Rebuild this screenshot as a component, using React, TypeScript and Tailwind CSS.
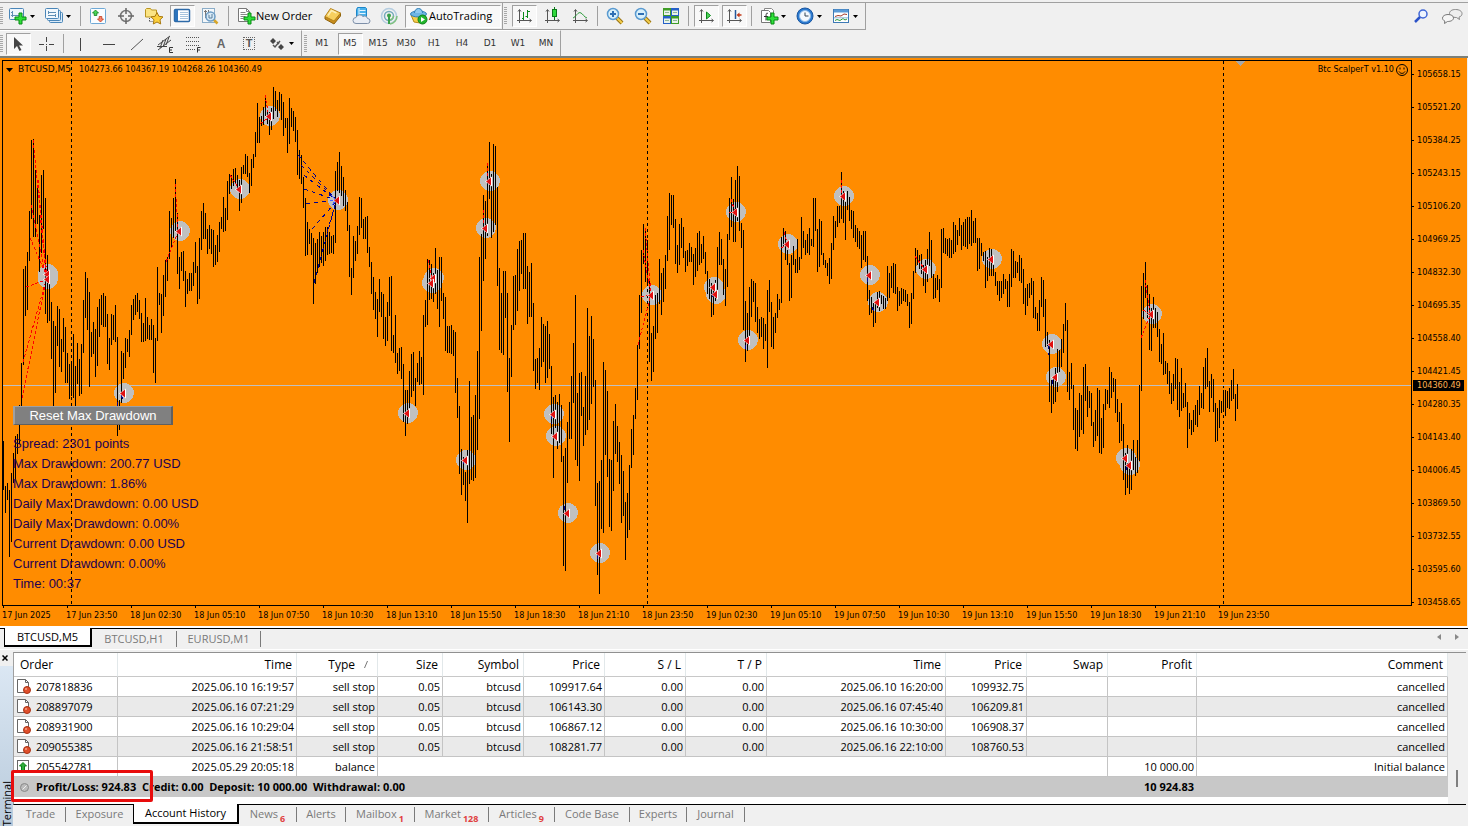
import React from 'react';
import clsx from 'clsx';

const UI = "font-['Open_Sans','Noto_Sans',sans-serif]";
const TAHOMA = "font-['DejaVu_Sans_Condensed','Noto_Sans',sans-serif]";

// High / low of every bar in canvas pixels, first bar at x = 3, one bar each 2px
const BARS: number[] = [
  441,489, 486,512, 483,499, 490,556, 473,541, 453,482, 436,478, 434,453, 405,443, 363,424,
  269,364, 266,315, 252,309, 211,260, 140,218, 139,236, 170,236, 185,223, 215,271, 175,252,
  170,228, 198,313, 255,322, 284,320, 302,358, 321,405, 326,392, 306,345, 309,366, 339,371,
  318,351, 327,382, 353,382, 364,398, 361,395, 334,397, 366,405, 343,383, 359,395, 344,393,
  300,352, 272,317, 278,329, 292,386, 332,356, 322,353, 329,376, 307,365, 299,336, 295,324,
  293,326, 296,326, 314,363, 338,369, 314,344, 315,339, 305,341, 337,435, 400,429, 351,402,
  353,378, 338,367, 339,351, 330,356, 305,334, 299,319, 295,314, 293,311, 300,318, 313,341,
  323,341, 298,340, 317,338, 325,339, 319,339, 325,372, 338,382, 267,340, 293,304, 294,332,
  275,315, 260,296, 257,280, 211,258, 218,247, 198,237, 179,230, 213,273, 257,288, 252,270,
  251,280, 271,306, 279,293, 273,290, 273,290, 262,285, 242,272, 266,303, 238,298, 211,249,
  203,238, 213,238, 229,253, 225,248, 229,253, 230,266, 245,264, 235,261, 222,251, 217,228,
  197,231, 208,230, 181,219, 174,193, 175,188, 169,185, 168,182, 175,190, 180,210, 167,202,
  165,173, 154,173, 156,176, 173,192, 159,185, 154,167, 132,156, 103,142, 117,142, 116,125,
  107,124, 95,115, 110,123, 112,134, 108,129, 87,118, 91,110, 100,116, 92,110, 94,119,
  102,135, 118,127, 118,152, 98,143, 108,126, 111,130, 117,141, 130,174, 150,178, 155,183,
  177,207, 198,255, 222,254, 229,243, 233,254, 238,303, 243,283, 239,272, 232,266, 236,262,
  232,265, 227,260, 227,254, 232,253, 236,252, 235,253, 171,242, 162,190, 152,192, 166,195,
  177,205, 190,210, 202,230, 225,276, 268,294, 236,277, 241,260, 226,253, 197,234, 198,227,
  219,238, 217,238, 216,252, 247,266, 262,293, 277,309, 292,318, 299,336, 279,311, 292,316,
  294,338, 317,345, 302,340, 277,315, 276,350, 335,352, 315,362, 353,373, 348,370, 347,378,
  364,421, 390,435, 390,423, 371,407, 354,396, 352,390, 378,405, 363,381, 351,384, 357,383,
  315,394, 300,326, 259,324, 260,299, 264,298, 273,301, 248,293, 270,308, 257,326, 257,300,
  293,318, 297,350, 326,352, 326,352, 325,353, 330,355, 332,392, 378,417, 406,473, 449,494,
  457,484, 472,500, 450,522, 381,483, 417,479, 415,480, 395,477, 351,449, 257,418, 234,330,
  195,280, 201,258, 163,235, 142,198, 174,237, 144,231, 146,224, 187,285, 268,349, 293,352,
  271,354, 271,317, 293,391, 358,441, 325,376, 276,329, 275,324, 249,310, 241,290, 240,273,
  233,288, 233,288, 266,323, 272,316, 263,316, 303,370, 359,388, 358,382, 348,389, 317,366,
  324,361, 326,382, 321,377, 334,368, 366,433, 397,477, 395,427, 402,448, 394,442, 405,461,
  456,565, 448,570, 422,482, 402,438, 376,438, 343,402, 295,459, 393,465, 373,480, 372,415,
  407,445, 376,434, 308,429, 336,419, 316,403, 339,386, 380,505, 483,574, 481,593, 460,528,
  362,532, 370,454, 391,476, 459,526, 460,530, 421,490, 404,453, 426,461, 442,483, 455,522,
  471,515, 502,559, 493,537, 465,529, 429,467, 415,454, 388,418, 345,399, 295,348, 250,312,
  224,263, 228,281, 240,284, 280,361, 333,380, 326,371, 295,338, 293,332, 259,303, 273,314,
  268,301, 255,288, 216,260, 193,249, 195,224, 195,227, 219,263, 245,272, 224,264, 218,247,
  227,257, 251,271, 250,265, 243,261, 247,261, 254,284, 248,276, 233,270, 231,264, 244,262,
  236,258, 252,273, 271,293, 279,298, 283,316, 285,314, 280,300, 247,293, 232,264, 239,264,
  259,294, 269,305, 234,286, 198,239, 177,226, 199,241, 180,241, 166,220, 176,230, 223,247,
  230,329, 301,361, 313,350, 287,335, 279,316, 281,301, 283,321, 307,332, 319,338, 317,336,
  318,348, 324,340, 290,367, 280,311, 302,346, 317,348, 313,332, 294,317, 299,309, 237,302,
  228,245, 231,259, 250,264, 263,300, 255,297, 246,264, 259,272, 239,272, 257,269, 217,258,
  231,247, 240,254, 234,252, 228,254, 239,245, 198,246, 198,230, 229,271, 219,266, 221,254,
  253,264, 260,267, 263,275, 258,283, 243,278, 216,249, 221,237, 206,226, 206,222, 172,218,
  191,222, 202,239, 191,209, 197,220, 210,228, 211,237, 225,241, 228,246, 231,248, 235,267,
  231,259, 231,261, 256,300, 290,314, 297,312, 303,326, 303,322, 292,307, 291,310, 295,303,
  296,308, 298,308, 266,300, 273,297, 266,287, 263,292, 264,293, 287,310, 291,305, 288,303,
  289,300, 290,301, 294,305, 302,327, 293,323, 271,298, 248,272, 250,264, 255,268, 254,273,
  265,285, 260,292, 249,281, 232,265, 240,277, 274,298, 278,297, 275,289, 279,301, 229,287,
  228,252, 238,253, 239,255, 238,257, 240,257, 222,253, 225,251, 230,244, 218,235, 225,249,
  222,245, 219,246, 217,248, 217,243, 210,245, 221,242, 218,242, 238,270, 238,268, 243,255,
  252,260, 251,287, 257,280, 248,275, 249,275, 265,275, 272,285, 281,294, 281,300, 281,297,
  274,293, 279,288, 281,306, 274,306, 249,286, 251,277, 261,277, 262,272, 255,280, 258,282,
  269,303, 288,314, 284,305, 283,297, 278,294, 281,317, 307,318, 313,330, 300,330, 277,306,
  280,316, 299,346, 332,345, 340,401, 380,412, 377,403, 368,401, 349,391, 350,371, 339,366,
  324,352, 303,330, 320,391, 372,399, 363,388, 385,429, 408,448, 410,450, 393,436, 395,429,
  367,433, 364,400, 386,416, 391,407, 393,425, 422,446, 410,440, 388,435, 390,452, 418,453,
  404,447, 389,409, 390,403, 367,407, 372,397, 378,391, 379,412, 399,421, 412,442, 403,440,
  424,479, 453,494, 445,487, 465,493, 449,489, 440,469, 457,475, 440,472, 385,460, 286,390,
  273,318, 262,297, 285,317, 294,349, 308,350, 297,327, 308,327, 312,336, 329,361, 344,363,
  333,374, 361,373, 363,383, 371,393, 383,403, 374,400, 358,388, 359,409, 382,416, 368,410,
  393,407, 383,406, 402,447, 413,428, 420,434, 410,431, 405,424, 400,426, 386,414, 393,407,
  367,408, 358,388, 348,386, 381,411, 374,397, 379,411, 403,441, 408,440, 400,427, 401,412,
  390,411, 390,415, 391,407, 388,408, 380,400, 369,398, 394,420, 384,408,
];

const MARKERS: [number, number][] = [
  [48, 274], [48, 279], [180, 231], [240, 189], [270, 116], [338, 200], [124, 393],
  [434, 278], [432, 283], [490, 181], [486, 228], [652, 295], [714, 287], [716, 294],
  [736, 212], [748, 340], [788, 244], [844, 196], [870, 275], [878, 302], [926, 269],
  [992, 259], [1052, 344], [1056, 377], [1152, 314], [1126, 458], [1130, 465],
  [408, 413], [466, 460], [554, 414], [556, 436], [568, 513], [600, 553],
];

const SELL_LINES =
  'M33 140L47 276M31 205L46 276M38 180L46 272M40 215L46 274M30 238L45 272M26 287L46 280M23 362L45 284M22 398L45 285' +
  'M175 184L178 228M166 262L178 232M265 95L268 112M260 124L268 118M230 175L239 189M428 260L432 278M487 163L488 178M483 210L484 224' +
  'M645 228L651 293M643 250L650 290M641 297L650 295M638 345L650 298M731 199L735 212M729 212L735 213M784 232L787 243M781 248L787 245' +
  'M841 180L842 193M915 256L924 268M1145 280L1150 312M1143 310L1150 314M1141 338L1150 316';
const BUY_LINES =
  'M298 155L336 200M301 165L336 200M304 175L336 200M304 189L336 200M306 204L336 200M312 229L335 203M327 232L336 203M314 283L335 205' +
  'M121 395L123 400M117 402L117 412M463 460L463 468M712 293L712 300M745 345L745 352M867 278L867 284M872 307L874 312M1048 345L1048 355M1052 380L1052 386M1126 466L1126 474M551 415L551 424M597 555L597 560M564 506L564 512';

const DAY_BREAKS = [71, 647, 1223];

const barsPath = () => {
  let d = '';
  for (let i = 0; i < BARS.length; i += 2) {
    d += `M${3 + i} ${BARS[i]}h1V${BARS[i + 1] + 1}h-1z`;
  }
  return d;
};

const prices = [
  '105658.15', '105521.20', '105384.25', '105243.15', '105106.20', '104969.25', '104832.30', '104695.35', '104558.40',
  '104421.45', '104280.35', '104143.40', '104006.45', '103869.50', '103732.55', '103595.60', '103458.65',
];

const times = [
  '17 Jun 2025', '17 Jun 23:50', '18 Jun 02:30', '18 Jun 05:10', '18 Jun 07:50', '18 Jun 10:30', '18 Jun 13:10',
  '18 Jun 15:50', '18 Jun 18:30', '18 Jun 21:10', '18 Jun 23:50', '19 Jun 02:30', '19 Jun 05:10', '19 Jun 07:50',
  '19 Jun 10:30', '19 Jun 13:10', '19 Jun 15:50', '19 Jun 18:30', '19 Jun 21:10', '19 Jun 23:50',
];

const stats = [
  'Spread: 2301 points',
  'Max Drawdown: 200.77 USD',
  'Max Drawdown: 1.86%',
  'Daily Max Drawdown: 0.00 USD',
  'Daily Max Drawdown: 0.00%',
  'Current Drawdown: 0.00 USD',
  'Current Drawdown: 0.00%',
  'Time: 00:37',
];

const orders = [
  { id: '207818836', open: '2025.06.10 16:19:57', price: '109917.64', close: '2025.06.10 16:20:00', closePrice: '109932.75' },
  { id: '208897079', open: '2025.06.16 07:21:29', price: '106143.30', close: '2025.06.16 07:45:40', closePrice: '106209.81' },
  { id: '208931900', open: '2025.06.16 10:29:04', price: '106867.12', close: '2025.06.16 10:30:00', closePrice: '106908.37' },
  { id: '209055385', open: '2025.06.16 21:58:51', price: '108281.77', close: '2025.06.16 22:10:00', closePrice: '108760.53' },
];

const terminalTabs = [
  { label: 'Trade', width: 'w-[50px]' },
  { label: 'Exposure', width: 'w-[67px]' },
  { label: 'Account History', width: 'w-[106px]', active: true },
  { label: 'News', width: 'w-[58px]', badge: '6' },
  { label: 'Alerts', width: 'w-[49px]' },
  { label: 'Mailbox', width: 'w-[69px]', badge: '1' },
  { label: 'Market', width: 'w-[74px]', badge: '128' },
  { label: 'Articles', width: 'w-[66px]', badge: '9' },
  { label: 'Code Base', width: 'w-[75px]' },
  { label: 'Experts', width: 'w-[57px]' },
  { label: 'Journal', width: 'w-[58px]' },
];

type Kids = { children?: React.ReactNode };

const Icon = ({ children }: Kids) => (
  <svg className="h-5 w-5 shrink-0" viewBox="0 0 20 20" fill="none" aria-hidden="true">{children}</svg>
);

const Plus = ({ x, y }: { x: number; y: number }) => (
  <path
    d={`M${x + 4} ${y}h3v4h4v3h-4v4h-3v-4h-4v-3h4z`}
    fill="#2fe03a"
    stroke="#078a12"
  />
);

const Caret = () => (
  <svg className="h-[3px] w-[5px] shrink-0" viewBox="0 0 5 3" aria-hidden="true"><path d="M0 0h5L2.500 3z" fill="#000" /></svg>
);

const ToolButton = ({ label, active, children }: Kids & { label: string; active?: boolean }) => (
  <span className="flex w-7 shrink-0 items-center justify-center">
    <button
      aria-label={label}
      className={clsx(
        'flex h-[22px] w-[25px] items-center justify-center',
        active && 'border border-t-[#a0a0a0] border-l-[#a0a0a0] border-r-white border-b-white bg-[#f8f8f8]',
      )}
    >
      {children}
    </button>
  </span>
);

const DropButton = ({ label, children }: Kids & { label: string }) => (
  <button aria-label={label} className="flex w-9 shrink-0 items-center gap-[2px] pl-1">
    {children}
    <Caret />
  </button>
);

const Handle = () => (
  <span className="my-1 w-1 shrink-0 bg-[repeating-linear-gradient(to_bottom,#a8a8a8_0px,#a8a8a8_1px,#f0f0f0_1px,#f0f0f0_2px)] bg-clip-content pr-px" />
);

const Sep = ({ wide }: { wide?: boolean }) => (
  <span className={clsx('flex shrink-0 justify-center py-[3px]', wide ? 'w-2' : 'w-[7px]')}>
    <span className="w-px bg-[#a0a0a0]" />
  </span>
);

const Axes = () => <path d="M5.500 4v13M3 14.500h14M4 5.500l1.500-2 1.500 2M15.500 13l2 1.500-2 1.500" stroke="#555" />;

const Magnifier = ({ plus }: { plus?: boolean }) => (
  <Icon>
    <path d="M12 12l5 5" stroke="#9a7413" strokeWidth="4" />
    <path d="M12 12l5 5" stroke="#f4cf4e" strokeWidth="2" />
    <circle cx="8" cy="8" r="5.500" fill="#d8f0fb" stroke="#5a9ad0" strokeWidth="1.500" />
    <path d={plus ? 'M5 8h6M8 5v6' : 'M5 8h6'} stroke="#2e6fb4" strokeWidth="2" />
  </Icon>
);

const MainToolbar = () => (
  <div className="flex h-7 items-stretch border-t border-[#a0a0a0]">
    <div className="flex border-r border-b border-[#a0a0a0]">
      <Handle />
      <DropButton label="New chart">
        <Icon>
          <rect x="1.500" y="2.500" width="14" height="11" rx="1" fill="#eef6fd" stroke="#4a86b8" />
          <path d="M4.500 5v6M3 9.500h8M3 6.500h2" stroke="#5f8fb5" />
          <Plus x={7} y={7} />
        </Icon>
      </DropButton>
      <DropButton label="Profiles">
        <Icon>
          <rect x="5.500" y="6.500" width="13" height="10" rx="1" fill="#dcebf8" stroke="#4a86b8" />
          <rect x="3.500" y="4.500" width="13" height="10" rx="1" fill="#dcebf8" stroke="#4a86b8" />
          <rect x="1.500" y="2.500" width="13" height="10" rx="1" fill="#f2f8fd" stroke="#4a86b8" />
          <path d="M4 6.500h8M4 9.500h8M4.500 5v3M11.500 8v3" stroke="#5f8fb5" />
        </Icon>
      </DropButton>
      <Sep wide />
      <ToolButton label="Market Watch">
        <Icon>
          <rect x="2.500" y="2.500" width="15" height="15" rx="1" fill="#fafdff" stroke="#6fa9d6" />
          <path d="M7.500 4l3 3h-1.700v2.500H6.200V7H4.500z" fill="#4ad658" stroke="#0a7f19" strokeWidth=".8" />
          <path d="M12.500 16l3-3h-1.700v-2.500h-2.600V13H9.500z" fill="#f9836c" stroke="#c23a1a" strokeWidth=".8" />
        </Icon>
      </ToolButton>
      <ToolButton label="Data Window">
        <Icon>
          <circle cx="10" cy="10" r="5.500" stroke="#777" strokeWidth="1.500" />
          <path d="M10 2v6M10 12v6M2 10h6M12 10h6" stroke="#666" strokeWidth="1.500" />
        </Icon>
      </ToolButton>
      <ToolButton label="Navigator">
        <Icon>
          <path d="M1.500 3.500l1-1h4l1 1.500h5v7h-11z" fill="#fbe483" stroke="#b99420" />
          <path d="M5.500 12v4M5.500 15.500h4" stroke="#555" strokeDasharray="1 1" />
          <path d="M13 6.500l1.900 3.800 4.100.6-3 2.900.7 4.200-3.700-2-3.700 2 .7-4.200-3-2.900 4.100-.6z" fill="#fcd03c" stroke="#a97a10" />
        </Icon>
      </ToolButton>
      <ToolButton label="Terminal" active>
        <Icon>
          <rect x="2.500" y="3.500" width="15" height="12" rx="1" fill="#fff" stroke="#2d6aa8" strokeWidth="1.500" />
          <rect x="3" y="4" width="3" height="11" fill="#2d74bd" />
          <path d="M8 6.500h8M8 8.500h8M8 10.500h8M8 12.500h8" stroke="#a8c4dd" />
        </Icon>
      </ToolButton>
      <ToolButton label="Strategy Tester">
        <Icon>
          <rect x="2.500" y="2.500" width="12" height="14" fill="#f4f8fb" stroke="#8badc8" />
          <path d="M5.500 4v8M4 5.500h3M8.500 4v5" stroke="#777" />
          <path d="M13.500 13.500l4 4" stroke="#d8a62a" strokeWidth="2.500" />
          <circle cx="10.500" cy="10.500" r="4.500" fill="#cfe6f6" fillOpacity=".8" stroke="#6d9cc4" strokeWidth="1.500" />
          <path d="M9 9v3h3V8" stroke="#5a7f9c" />
        </Icon>
      </ToolButton>
      <Sep wide />
      <button className={`${UI} flex w-[87px] shrink-0 items-center pl-1 text-[11px] text-black`}>
        <Icon>
          <path d="M2.500 2.500h8l3 3v10h-11z" fill="#fff" stroke="#777" />
          <path d="M10.500 2.500v3h3M4.500 6.500h5M4.500 8.500h7M4.500 10.500h5M4.500 12.500h3" stroke="#888" />
          <Plus x={8} y={7} />
        </Icon>
        <span className="whitespace-nowrap">New Order</span>
      </button>
      <ToolButton label="MetaEditor">
        <Icon>
          <path d="M2 10.500v2.500l9 5 6.500-8V7z" fill="#c98d1c" stroke="#8f640e" strokeLinejoin="round" />
          <path d="M2 10.500L7.500 2.500l10 4.500-6.500 8z" fill="#f7cf5e" stroke="#b5821b" strokeLinejoin="round" />
          <path d="M5 9.500l3.500-5 5 2.500" stroke="#fdeeb4" strokeWidth="1.500" />
        </Icon>
      </ToolButton>
      <ToolButton label="MQL5 VPS">
        <Icon>
          <path d="M6.500 1.500h8l1 1v9h-10v-8z" fill="#49b2ec" stroke="#1d86c9" />
          <path d="M8.500 4.500h6M8.500 7.500h6M8 2v9" stroke="#e4f5ff" />
          <path d="M5 17.500a3 3 0 010-6 4 4 0 017-1 3 3 0 014.500 2 2.500 2.500 0 010 5z" fill="#e9edf4" stroke="#7d8fa8" />
        </Icon>
      </ToolButton>
      <ToolButton label="Signals">
        <Icon>
          <circle cx="10" cy="10" r="7.500" stroke="#b5cde0" strokeWidth="1.500" />
          <circle cx="10" cy="10" r="4.500" stroke="#74a9bb" strokeWidth="1.500" />
          <path d="M11 18a8 8 0 007-8M11 14a4.500 4.500 0 003.500-4" stroke="#7fc17f" strokeWidth="1.500" />
          <circle cx="10" cy="9.500" r="2" fill="#39a04a" />
          <path d="M10 10v8" stroke="#39a04a" strokeWidth="2" />
        </Icon>
      </ToolButton>
      <button
        className={`${UI} mr-px ml-[2px] flex h-[23px] w-24 shrink-0 items-center self-center border border-t-[#a0a0a0] border-l-[#a0a0a0] border-r-white border-b-white bg-[#f8f8f8] pl-[3px] text-[11px] text-black`}
      >
        <Icon>
          <path d="M2 9l3 7 6 1 6-8z" fill="#f6cf4a" stroke="#b58a1a" />
          <ellipse cx="9.500" cy="8" rx="8" ry="3" fill="#6fb6e4" stroke="#2e7fb8" />
          <path d="M5.500 7c0-6 8-6 8 0" fill="#8fcaf0" stroke="#2e7fb8" />
          <circle cx="13.500" cy="13.500" r="4.500" fill="#22b52e" stroke="#0c8218" />
          <path d="M12 11v5l4-2.500z" fill="#fff" />
        </Icon>
        AutoTrading
      </button>
    </div>
    <div className="flex border-r border-b border-[#a0a0a0] pr-[2px] pl-px">
      <Handle />
      <span className="w-[2px]" />
      <ToolButton label="Bar chart" active>
        <Icon><Axes /><path d="M9.500 6v8M8 12.500h2M13.500 4v8M14 5.500h2M11.500 10.500h2" stroke="#0a8a1a" /></Icon>
      </ToolButton>
      <ToolButton label="Candlesticks">
        <Icon><Axes /><path d="M12.500 1v13" stroke="#0a7a18" /><rect x="10.500" y="3.500" width="4" height="7" fill="#2fd83c" stroke="#0a7a18" /></Icon>
      </ToolButton>
      <ToolButton label="Line chart">
        <Icon><Axes /><path d="M3 12c3-1 5-7 8-5 2 1 3 4 6 5" stroke="#2a9a3a" /></Icon>
      </ToolButton>
      <Sep />
      <ToolButton label="Zoom in"><Magnifier plus /></ToolButton>
      <ToolButton label="Zoom out"><Magnifier /></ToolButton>
      <ToolButton label="Tile windows">
        <Icon>
          <path d="M2 2h8v8H2zM10 10h8v8h-8z" fill="#3f9c26" />
          <path d="M10 2h8v8h-8zM2 10h8v8H2z" fill="#2560c8" />
          <path d="M3 4.500h6V9H3zM11 4.500h6V9h-6zM3 12.500h6V17H3zM11 12.500h6V17h-6z" fill="#e9f3ea" />
          <path d="M4 6.500h4M12 6.500h4M4 14.500h4M12 14.500h4" stroke="#8fb59a" />
        </Icon>
      </ToolButton>
      <Sep />
      <ToolButton label="Auto scroll" active>
        <Icon><Axes /><path d="M10.500 6v7l4-3.500z" fill="#4fd45a" stroke="#0a8a1a" /></Icon>
      </ToolButton>
      <ToolButton label="Chart shift" active>
        <Icon><Axes /><path d="M11.500 4v9" stroke="#24579a" strokeWidth="1.500" /><path d="M17.500 9h-3" stroke="#c23a1a" strokeWidth="1.500" /><path d="M15.500 6.500v5L12.500 9z" fill="#c23a1a" /></Icon>
      </ToolButton>
      <Sep />
      <DropButton label="Indicators">
        <Icon>
          <path d="M5.500 2.500h7l2 2v10h-9z" fill="#fff" stroke="#888" />
          <path d="M2.500 4.500h7l2 2v10h-9z" fill="#fff" stroke="#777" />
          <path d="M9 7.500c-2-1-2 0-2 7M5 10.500h4" stroke="#333" />
          <Plus x={8} y={7} />
        </Icon>
      </DropButton>
      <DropButton label="Periods">
        <Icon>
          <circle cx="10" cy="10" r="8" fill="#2b7ad0" stroke="#1a56a0" />
          <circle cx="10" cy="10" r="5.500" fill="#f4f9fe" stroke="#8fbbe8" />
          <path d="M10 6.500V10h3.500" stroke="#345" />
        </Icon>
      </DropButton>
      <DropButton label="Templates">
        <Icon>
          <rect x="2.500" y="3.500" width="15" height="13" fill="#fff" stroke="#3d7ab5" />
          <path d="M3 5h14" stroke="#5a9ad6" strokeWidth="3" />
          <path d="M4 10.500l3-1 3 .5 3-2 3 .5" stroke="#a33a2a" />
          <path d="M4 14.500l2-1 3 1 3-2 2 1.500 2-1" stroke="#2a9a3a" />
          <path d="M3 11.800h14" stroke="#8fb5d6" />
        </Icon>
      </DropButton>
    </div>
    <div className="ml-auto flex items-center gap-[10px] pr-[5px]">
      <button aria-label="Search">
        <Icon>
          <circle cx="12" cy="7" r="4" fill="#eef4ff" stroke="#3f66d6" strokeWidth="1.500" />
          <path d="M9 10l-5 5" stroke="#2c53c8" strokeWidth="2.500" />
        </Icon>
      </button>
      <button aria-label="Chat">
        <svg className="h-5 w-[22px]" viewBox="0 0 22 20" fill="none" aria-hidden="true">
          <path d="M14.500 2.500c4 0 6.500 1.800 6.500 4 0 1.800-1 3-3 3.600l.5 2.400-3-2c-4 0-7-1.500-7-4s2.500-4 6-4z" fill="#eee" stroke="#888" />
          <path d="M7 7.500c3 0 5.500 1.300 5.500 3.500S10 14.500 6.500 14.500l-3 2 .3-2.500C2 13.300 1.500 12 1.500 11c0-2 2.500-3.500 5.500-3.500z" fill="#f6f6f6" stroke="#777" />
        </svg>
      </button>
    </div>
  </div>
);

const periods = ['M1', 'M5', 'M15', 'M30', 'H1', 'H4', 'D1', 'W1', 'MN'];

const LineToolbar = () => (
  <div className="flex h-[26px] items-stretch">
    <div className="flex border-t border-r border-t-white border-r-[#a0a0a0] pr-[2px]">
      <Handle />
      <ToolButton label="Cursor" active>
        <Icon><path d="M6 3v12l3-3 2.500 5 2-1-2.500-4.500h4z" fill="#444" /></Icon>
      </ToolButton>
      <ToolButton label="Crosshair">
        <Icon><path d="M10.500 3v5M10.500 12v5M3 10.500h5M13 10.500h5M10 10.500h1" stroke="#444" /></Icon>
      </ToolButton>
      <Sep />
      <ToolButton label="Vertical line"><Icon><path d="M9.500 4v13" stroke="#444" /></Icon></ToolButton>
      <ToolButton label="Horizontal line"><Icon><path d="M4 10.500h12" stroke="#444" /></Icon></ToolButton>
      <ToolButton label="Trendline"><Icon><path d="M4 16L16 5" stroke="#555" /></Icon></ToolButton>
      <ToolButton label="Equidistant channel">
        <Icon>
          <path d="M3 11L15 2M3 16L16 6M5 14l3-8M8 13l3-8M11 11l3-8M2 12.500h10" stroke="#444" />
          <path d="M18 13.500h-3.500v5H18M14.500 16H17" stroke="#333" />
        </Icon>
      </ToolButton>
      <ToolButton label="Fibonacci retracement">
        <Icon>
          <path d="M3 3.500h14M3 7.500h14M3 11.500h14M3 15.500h9" stroke="#555" strokeDasharray="1 1" />
          <path d="M17.500 13.500h-3v5M14.500 16H17" stroke="#333" />
        </Icon>
      </ToolButton>
      <ToolButton label="Text"><span className="font-['Liberation_Sans',sans-serif] text-[12px] font-bold text-[#666]">A</span></ToolButton>
      <ToolButton label="Text label">
        <span className="border border-dotted border-[#666] px-[2px] font-['Liberation_Sans',sans-serif] text-[11px] leading-[11px] font-bold text-[#555]">T</span>
      </ToolButton>
      <DropButton label="Arrows">
        <Icon>
          <path d="M6 4l3 3-3 3-3-3zM14 10l3 3-3 3-3-3z" fill="#444" />
          <path d="M6 11l2 2 5-6M10 8l2 2" stroke="#555" strokeWidth="1.500" />
        </Icon>
      </DropButton>
    </div>
    <div className="flex border-t border-r border-t-white border-r-[#a0a0a0] pl-[2px]">
      <Handle />
      {periods.map((p) => (
        <ToolButton key={p} label={p} active={p === 'M5'}>
          <span className="font-['DejaVu_Sans',sans-serif] text-[9px] text-[#333]">{p}</span>
        </ToolButton>
      ))}
    </div>
  </div>
);

const Chart = () => (
  <section className={`${TAHOMA} mr-px flex bg-[#ff8c00] text-[9px] text-black`}>
    <div className="flex min-w-0 flex-1 flex-col pt-[2px] pl-[2px]">
      <div className="relative flex flex-1 overflow-hidden border border-black">
        <svg className="min-w-0 flex-1" shapeRendering="crispEdges" fill="none" aria-label="BTCUSD five minute bars">
          <g transform="translate(-3 -61)">
            {MARKERS.map(([x, y]) => (
              <circle key={`${x}-${y}`} cx={x} cy={y} r="10" fill="#c0c0c0" />
            ))}
            {DAY_BREAKS.map((x) => (
              <path key={x} d={`M${x + 0.5} 61V605`} stroke="#000" strokeDasharray="3 3" />
            ))}
            <rect x="3" y="385" width="100%" height="1" fill="#c0c0c0" />
            <path d={barsPath()} fill="#000" />
            <path d={SELL_LINES} stroke="#f00" strokeDasharray="3 2" />
            <path d={BUY_LINES} stroke="#00008b" strokeDasharray="4 4" />
            <path d="M336 200l-5-5M336 200h-6M336 200l-4 5" stroke="#4060ff" />
            {MARKERS.map(([x, y]) => (
              <g key={`${x}-${y}`} shapeRendering="auto">
                <path d={`M${x - 5} ${y + 0.5}l7-5v10z`} fill="#fff" />
                <path d={`M${x - 4} ${y + 0.5}l5-4v8z`} fill="#e01010" />
              </g>
            ))}
            <path d="M1235 61h10l-5 5z" fill="#a8a8a8" />
          </g>
        </svg>
        <div className="absolute inset-x-0 top-[3px] flex h-3 items-center px-[3px] whitespace-nowrap">
          <svg className="mr-[5px] h-1 w-[7px]" viewBox="0 0 7 4" aria-hidden="true"><path d="M0 0h7L3.500 4z" fill="#000" /></svg>
          <span className="w-[61px] font-['DejaVu_Sans',sans-serif]">BTCUSD,M5</span>
          <span>104273.66 104367.19 104268.26 104360.49</span>
          <span className="ml-auto">Btc ScalperT v1.10</span>
          <svg className="ml-[2px] h-3 w-3" viewBox="0 0 12 12" fill="none" stroke="#000" aria-hidden="true">
            <circle cx="6" cy="6" r="5.500" />
            <path d="M4 3.500v2M8 3.500v2M3 7.500c1.500 2.500 4.500 2.500 6 0" />
          </svg>
        </div>
        <div className="absolute top-[345px] left-[10px] flex flex-col font-['Liberation_Sans',sans-serif] text-[13px]">
          <button className="mb-[9px] h-[19px] w-40 border-t border-r-2 border-b border-l-2 border-t-[#a0a0a0] border-r-[#606060] border-b-[#606060] border-l-[#a0a0a0] bg-[#808080] leading-[17px] text-white">
            Reset Max Drawdown
          </button>
          {stats.map((line) => (
            <p key={line} className="leading-5 whitespace-nowrap text-[#1c0052]">{line}</p>
          ))}
        </div>
      </div>
      <div className="flex h-5 overflow-hidden">
        {times.map((t) => (
          <div key={t} className="w-16 shrink-0 whitespace-nowrap">
            <div className="ml-px h-[2px] w-px bg-black" />
            <div className="leading-[14px]">{t}</div>
          </div>
        ))}
      </div>
    </div>
    <div className="relative w-[55px] shrink-0 pb-[7px]">
      {prices.map((p) => (
        <div key={p} className="flex h-[33px] items-center gap-[3px]">
          <span className="h-px w-[2px] bg-black" />
          {p}
        </div>
      ))}
      <div className="absolute top-[322px] left-px h-[11px] w-[51px] bg-black pl-1 leading-[11px] text-[#ffb050]">104360.49</div>
    </div>
  </section>
);

const ChartTabs = () => (
  <nav className={`${UI} flex h-6 border-t-2 border-b border-white text-[11px] text-[#7a7a7a]`}>
    <div className="flex flex-1 border-t border-black pl-1">
      <button className="-mt-px h-[19px] w-[88px] border border-t-0 border-r-2 border-b-2 border-black bg-white pt-px leading-4 text-black">BTCUSD,M5</button>
      <button className="my-[2px] w-[85px] border-r border-[#7a7a7a] pb-px leading-3">BTCUSD,H1</button>
      <button className="my-[2px] w-[84px] border-r border-[#7a7a7a] pb-px leading-3">EURUSD,M1</button>
      <div className="ml-auto flex items-center gap-[14px] pr-[9px] pb-1">
        <button aria-label="Scroll left"><svg className="h-[6px] w-1" viewBox="0 0 4 6"><path d="M4 0v6L0 3z" fill="#888" /></svg></button>
        <button aria-label="Scroll right"><svg className="h-[6px] w-1" viewBox="0 0 4 6"><path d="M0 0v6l4-3z" fill="#888" /></svg></button>
      </div>
    </div>
  </nav>
);

const OrderIcon = () => (
  <svg className="h-[15px] w-[14px] shrink-0" viewBox="0 0 14 15" fill="none" aria-hidden="true">
    <path d="M.5.500h8l3 3v10H.5z" fill="#fff" stroke="#666" />
    <path d="M8.500.500v3h3" stroke="#666" />
    <circle cx="10" cy="11" r="3.500" fill="#e0502c" stroke="#a83214" />
    <circle cx="9" cy="10" r="1" fill="#f7a58c" />
  </svg>
);

const BalanceIcon = () => (
  <svg className="h-[13px] w-[14px] shrink-0" viewBox="0 0 14 13" fill="none" aria-hidden="true">
    <rect x=".5" y=".5" width="11" height="12" fill="#fff" stroke="#666" />
    <path d="M6 2.500L2.500 6h2v5h3V6h2z" fill="#2fae3a" stroke="#0a7f19" />
  </svg>
);

const Th = ({ children }: Kids) => (
  <th className="border-r border-r-[#e2e8ea] border-b border-b-[#c8c8c8] pr-1 text-right font-normal">{children}</th>
);

const Td = ({ children, span }: Kids & { span?: number }) => (
  <td colSpan={span} className="border-r border-b border-[#c4c4c4] pr-[2px] text-right whitespace-nowrap">{children}</td>
);

const HistoryTable = () => (
  <table className={`${UI} w-full table-fixed border-separate border-spacing-0 text-[11px] text-black`}>
    <colgroup>
      <col className="w-[104px]" />
      <col className="w-[179px]" />
      <col className="w-[81px]" />
      <col className="w-[65px]" />
      <col className="w-[81px]" />
      <col className="w-[81px]" />
      <col className="w-[81px]" />
      <col className="w-[81px]" />
      <col className="w-[179px]" />
      <col className="w-[81px]" />
      <col className="w-[81px]" />
      <col className="w-[89px]" />
      <col />
    </colgroup>
    <thead>
      <tr className="h-6 bg-white text-[12px]">
        <th className="border-r border-r-[#e2e8ea] border-b border-b-[#c8c8c8] pl-[6px] text-left font-normal">Order</th>
        <Th>Time</Th>
        <Th>
          <span className="flex items-center justify-end gap-[9px] pr-[5px]">
            Type
            <svg className="h-[7px] w-1" viewBox="0 0 4 7" aria-hidden="true"><path d="M3.500 0L.5 7" stroke="#777" /></svg>
          </span>
        </Th>
        <Th>Size</Th>
        <Th>Symbol</Th>
        <Th>Price</Th>
        <Th>S / L</Th>
        <Th>T / P</Th>
        <Th>Time</Th>
        <Th>Price</Th>
        <Th>Swap</Th>
        <Th>Profit</Th>
        <Th>Comment</Th>
      </tr>
    </thead>
    <tbody className="leading-[19px]">
      {orders.map((o) => (
        <tr key={o.id} className="h-5 bg-white even:bg-[#eaeaea]">
          <td className="border-r border-b border-[#c4c4c4] pl-[3px]">
            <span className="flex h-[19px] items-center gap-[5px]"><OrderIcon />{o.id}</span>
          </td>
          <Td>{o.open}</Td>
          <Td>sell stop</Td>
          <Td>0.05</Td>
          <Td>btcusd</Td>
          <Td>{o.price}</Td>
          <Td>0.00</Td>
          <Td>0.00</Td>
          <Td>{o.close}</Td>
          <Td>{o.closePrice}</Td>
          <Td />
          <Td />
          <Td>cancelled</Td>
        </tr>
      ))}
      <tr className="h-5 bg-white">
        <td className="border-r border-b border-[#c4c4c4] pl-[3px]">
          <span className="flex h-[19px] items-center gap-[5px]"><BalanceIcon />205542781</span>
        </td>
        <Td>2025.05.29 20:05:18</Td>
        <Td>balance</Td>
        <Td span={8} />
        <Td>10 000.00</Td>
        <Td>Initial balance</Td>
      </tr>
    </tbody>
    <tfoot>
      <tr className="h-5 bg-[#c8c8c8] leading-5 font-bold">
        <td colSpan={11} className="relative">
          <span className="flex items-center gap-[7px] pl-[6px] whitespace-pre">
            <svg className="h-[9px] w-[9px]" viewBox="0 0 9 9" aria-hidden="true">
              <circle cx="4.500" cy="4.500" r="4" fill="#bbb" stroke="#888" />
              <path d="M2.500 6.500l4-4" stroke="#eee" />
            </svg>
            {'Profit/Loss: 924.83  Credit: 0.00  Deposit: 10 000.00  Withdrawal: 0.00'}
          </span>
          <div className="pointer-events-none absolute -top-[7px] -left-[3px] h-8 w-[142px] rounded-[2px] border-[3px] border-[#e80c0c]" />
        </td>
        <td className="pr-[3px] text-right">10 924.83</td>
        <td />
      </tr>
    </tfoot>
  </table>
);

const Terminal = () => (
  <section className="flex flex-1 pt-[2px]">
    <div className="flex w-[13px] shrink-0 flex-col">
      <button aria-label="Close" className="flex h-[14px] items-start justify-center pt-[3px] pr-1">
        <svg className="h-[6px] w-[6px]" viewBox="0 0 6 6"><path d="M.5.500l5 5M5.500.500l-5 5" stroke="#000" strokeWidth="1.500" /></svg>
      </button>
      <div className="flex flex-1 items-end bg-linear-to-b from-[#dbe7f3] to-[#b9cbdc]">
        <span className={`${UI} w-[13px] rotate-180 text-[11px] leading-[13px] text-black [writing-mode:vertical-rl]`}>Terminal</span>
      </div>
    </div>
    <div className="flex min-w-0 flex-1 flex-col">
      <div className="mr-[2px] flex border-t border-b border-l border-t-[#909090] border-b-black border-l-[#a0a0a0] bg-white">
        <div className="min-w-0 flex-1 pb-[7px]">
          <HistoryTable />
        </div>
        <div className="flex w-[18px] shrink-0 items-end justify-center bg-[#f0f0f0] pb-[17px]">
          <span className="h-[17px] w-[2px] bg-[#808080]" />
        </div>
      </div>
      <nav className={`${UI} flex h-[21px] text-[11px] text-[#7a7a7a]`}>
        <span className="w-[3px]" />
        {terminalTabs.map((t, i) =>
          t.active ? (
            <button key={t.label} className={clsx('-mt-px h-5 border border-t-0 border-r-2 border-b-2 border-black bg-white leading-[18px] whitespace-nowrap text-black', t.width)}>
              {t.label}
            </button>
          ) : (
            <button key={t.label} className={clsx('mt-[2px] mb-1 flex items-center justify-center gap-[2px] whitespace-nowrap', i !== 1 && 'border-r border-[#7a7a7a]', t.width)}>
              {t.label}
              {t.badge && <span className="relative top-1 text-[9px] font-bold text-[#e04040]">{t.badge}</span>}
            </button>
          ),
        )}
      </nav>
    </div>
  </section>
);

export default function App() {
  return (
    <main className="flex min-h-screen flex-col overflow-hidden bg-[#f0f0f0]">
      <header className="border-b-2 border-[#7c8078] pt-[2px]">
        <MainToolbar />
        <LineToolbar />
      </header>
      <Chart />
      <ChartTabs />
      <Terminal />
    </main>
  );
}
